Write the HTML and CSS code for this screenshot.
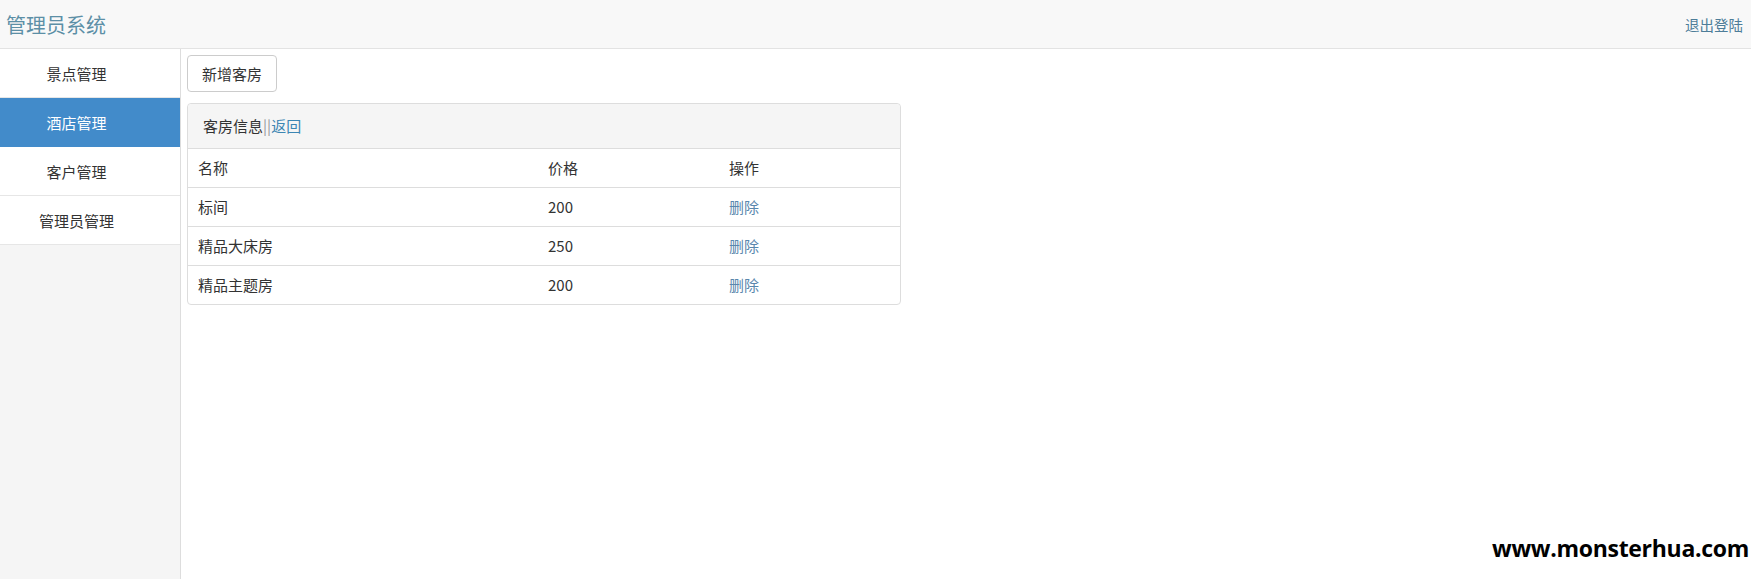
FILE: index.html
```html
<!DOCTYPE html>
<html lang="zh-CN">
<head>
  <meta charset="UTF-8">
  <title>管理员系统</title>
  <link rel="stylesheet" href="styles.css">
</head>
<body>

  <div class="topo">
    <a class="marca" href="#">管理员系统</a>
    <a class="sair" href="#">退出登陆</a>
  </div>

  <div class="principal">
    <ul class="menu">
      <li><a href="#">景点管理</a></li>
      <li class="ativo"><a href="#">酒店管理</a></li>
      <li><a href="#">客户管理</a></li>
      <li><a href="#">管理员管理</a></li>
    </ul>

    <div class="conteudo">
      <button class="btn">新增客房</button>

      <div class="painel">
        <div class="painel-titulo">客房信息<span class="sep">||</span><a href="#">返回</a></div>
        <table class="tabela">
          <tr><td class="c1">名称</td><td class="c2">价格</td><td>操作</td></tr>
          <tr><td>标间</td><td>200</td><td><a href="#">删除</a></td></tr>
          <tr><td>精品大床房</td><td>250</td><td><a href="#">删除</a></td></tr>
          <tr><td>精品主题房</td><td>200</td><td><a href="#">删除</a></td></tr>
        </table>
      </div>
    </div>
  </div>

  <div class="marca-agua">www.monsterhua.com</div>

</body>
</html>
```

FILE: styles.css
```css
body {
  margin: 0;
  font-family: "Noto Sans CJK SC", "Liberation Sans", sans-serif;
  font-size: 15px;
  color: #333;
  background: #fff;
  overflow: hidden;
}

a {
  text-decoration: none;
}

.topo {
  height: 48px;
  display: flex;
  align-items: center;
  justify-content: space-between;
  padding: 0 8px 0 6px;
  background: #f8f8f8;
  border-bottom: 1px solid #e3e3e3;
}

.marca {
  font-size: 20px;
  color: #5c8fa6;
}

.sair {
  font-size: 14.5px;
  color: #4d7d99;
}

.principal {
  display: flex;
  height: 530px;
}

.menu {
  list-style: none;
  margin: 0;
  padding: 0;
  width: 180px;
  background: #f5f5f5;
  border-right: 1px solid #ddd;
}

.menu li {
  background: #fff;
  border-bottom: 1px solid #e6e6e6;
}

.menu li a {
  display: block;
  height: 48px;
  line-height: 49px;
  padding-right: 27px;
  text-align: center;
  color: #333;
}

.menu li.ativo {
  background: #428bca;
  border-bottom-color: #428bca;
}

.menu li.ativo a {
  color: #fff;
}

.conteudo {
  padding: 6px 0 0 6px;
}

.btn {
  display: block;
  width: 90px;
  height: 37px;
  padding: 0;
  font-family: inherit;
  font-size: 15px;
  color: #333;
  background: #fff;
  border: 1px solid #ccc;
  border-radius: 4px;
  margin-bottom: 11px;
}

.painel {
  width: 712px;
  border: 1px solid #ddd;
  border-radius: 4px;
}

.painel-titulo {
  height: 44px;
  line-height: 44px;
  padding-left: 15px;
  background: #f5f5f5;
  border-bottom: 1px solid #ddd;
  border-radius: 4px 4px 0 0;
}

.sep {
  color: #999;
}

.painel-titulo a {
  color: #3c86b3;
}

.tabela {
  width: 100%;
  border-collapse: collapse;
}

.tabela td {
  padding: 9px 10px;
  line-height: 20px;
  border-top: 1px solid #ddd;
}

.tabela tr:first-child td {
  border-top: none;
}

.tabela .c1 {
  width: 330px;
}

.tabela .c2 {
  width: 161px;
}

.tabela a {
  color: #5a87ad;
}

.marca-agua {
  position: absolute;
  right: 2px;
  bottom: 15px;
  padding-left: 4px;
  background: #fff;
  font-family: "Open Sans", sans-serif;
  font-weight: bold;
  font-size: 23px;
  letter-spacing: -0.3px;
  color: #000;
}
```
